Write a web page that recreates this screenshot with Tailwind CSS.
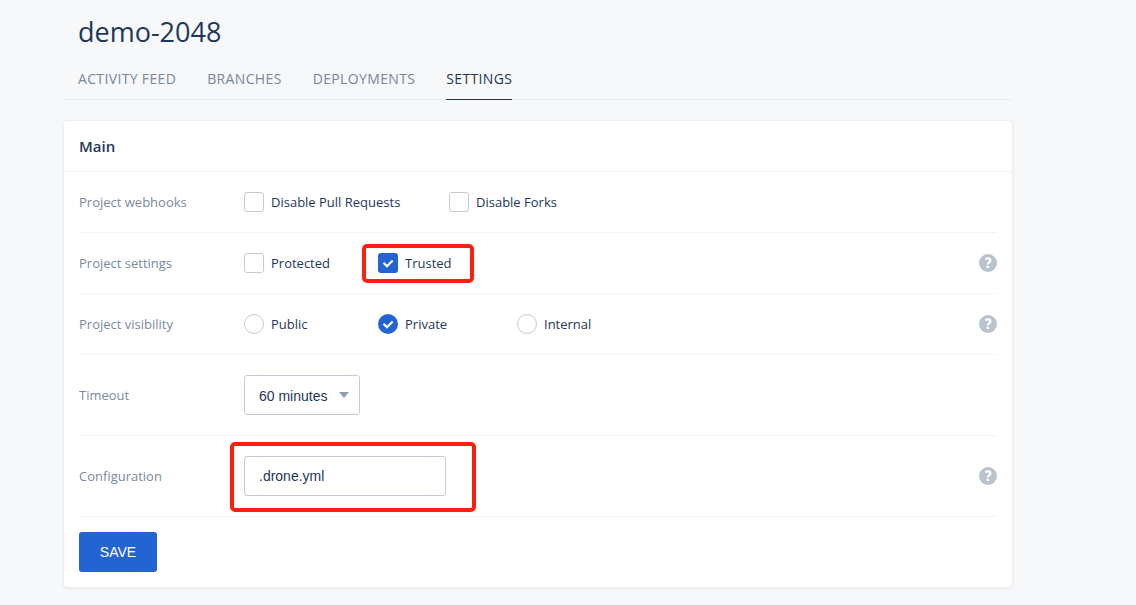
<!DOCTYPE html>
<html lang="en">
<head>
<meta charset="utf-8">
<meta name="viewport" content="width=device-width, initial-scale=1">
<title>demo-2048 settings</title>
<script src="https://cdn.jsdelivr.net/npm/@tailwindcss/browser@4"></script>
</head>
<body class="min-h-screen bg-[#f6f8fa] font-['Segoe_UI','Open_Sans',sans-serif] text-[13px] leading-[21px] text-[#1e375a]">
<svg class="hidden" aria-hidden="true">
  <symbol id="tick" viewBox="0 0 20 20"><path d="M5.500 9.800l3.500 3.500 5.700-5.800" fill="none" stroke="#fff" stroke-width="2.200"/></symbol>
  <symbol id="help" viewBox="0 0 18 18"><circle cx="9" cy="9" r="9" fill="currentColor"/><path d="M6.300 5.200c1.700-1.200 5-1.200 5 1.200 0 2-2.500 1.900-2.500 4.100" fill="none" stroke="#fff" stroke-width="2.300"/><path d="M7.500 11.800h2.400v2.200H7.500z" fill="#fff"/></symbol>
</svg>
<div class="mr-[123px] ml-[63px]">
  <header>
    <h1 class="px-[15px] pt-3 text-[27px] leading-10">demo-2048</h1>
    <nav class="mt-3 flex gap-[31px] border-b border-[#ebedf1] px-[15px] text-sm leading-[30px] tracking-wide text-[#7a869a]">
      <a href="#" class="-mb-px border-b border-transparent pb-[5px]">ACTIVITY FEED</a>
      <a href="#" class="-mb-px border-b border-transparent pb-[5px]">BRANCHES</a>
      <a href="#" class="-mb-px border-b border-transparent pb-[5px]">DEPLOYMENTS</a>
      <a href="#" aria-current="page" class="-mb-px border-b border-[#1e375a] pb-[5px] font-medium text-[#1e375a]">SETTINGS</a>
    </nav>
  </header>
  <form class="mt-5 rounded-sm border border-[#ebeef2] bg-white shadow-sm shadow-black/5">
    <h2 class="border-b border-[#f0f1f3] px-[15px] text-[15px] leading-[50px] font-semibold">Main</h2>
    <div class="px-[15px]">
      <fieldset class="flex h-[61px] items-center border-b border-[#f3f4f6]">
        <div class="w-[165px] text-[#7a8a9f]">Project webhooks</div>
        <label class="flex w-[205px] items-center gap-[7px]"><input type="checkbox" class="size-5 appearance-none rounded-[3px] border border-[#c5cad6] bg-white">Disable Pull Requests</label>
        <label class="flex items-center gap-[7px]"><input type="checkbox" class="size-5 appearance-none rounded-[3px] border border-[#c5cad6] bg-white">Disable Forks</label>
      </fieldset>
      <fieldset class="flex h-[61px] items-center border-b border-[#f3f4f6]">
        <div class="w-[165px] text-[#7a8a9f]">Project settings</div>
        <label class="flex w-[134px] items-center gap-[7px]"><input type="checkbox" class="size-5 appearance-none rounded-[3px] border border-[#c5cad6] bg-white">Protected</label>
        <div class="relative">
          <label class="flex items-center gap-[7px]"><span class="grid"><input type="checkbox" checked class="col-start-1 row-start-1 size-5 appearance-none rounded-[3px] bg-[#2364d2]"><svg class="pointer-events-none col-start-1 row-start-1 size-5"><use href="#tick"/></svg></span>Trusted</label>
          <div class="pointer-events-none absolute -top-[9px] -left-4 h-[39px] w-[112px] rounded-[5px] border-4 border-[#ff1e12]"></div>
        </div>
        <button type="button" aria-label="Help" class="ml-auto text-[#bac3cd]"><svg class="size-[18px]"><use href="#help"/></svg></button>
      </fieldset>
      <fieldset class="flex h-[61px] items-center border-b border-[#f3f4f6]">
        <div class="w-[165px] text-[#7a8a9f]">Project visibility</div>
        <label class="flex w-[134px] items-center gap-[7px]"><input type="radio" name="visibility" class="size-5 appearance-none rounded-full border border-[#c5cad6] bg-white">Public</label>
        <label class="flex w-[139px] items-center gap-[7px]"><span class="grid"><input type="radio" name="visibility" checked class="col-start-1 row-start-1 size-5 appearance-none rounded-full bg-[#2364d2]"><svg class="pointer-events-none col-start-1 row-start-1 size-5"><use href="#tick"/></svg></span>Private</label>
        <label class="flex items-center gap-[7px]"><input type="radio" name="visibility" class="size-5 appearance-none rounded-full border border-[#c5cad6] bg-white">Internal</label>
        <button type="button" aria-label="Help" class="ml-auto text-[#bac3cd]"><svg class="size-[18px]"><use href="#help"/></svg></button>
      </fieldset>
      <div class="flex h-[81px] items-center border-b border-[#f3f4f6]">
        <label for="timeout" class="w-[165px] text-[#7a8a9f]">Timeout</label>
        <div class="grid items-center">
          <select id="timeout" class="col-start-1 row-start-1 h-10 w-29 appearance-none rounded-[3px] border border-[#c5cad6] bg-white px-3.5 pt-0.5 font-['Liberation_Sans',sans-serif] text-sm"><option>60 minutes</option></select>
          <svg class="pointer-events-none col-start-1 row-start-1 mr-[11px] h-1.5 w-2.5 justify-self-end" viewBox="0 0 10 6"><path d="M0 0h10L5 6z" fill="#959eab"/></svg>
        </div>
      </div>
      <div class="flex h-[81px] items-center border-b border-[#f3f4f6]">
        <label for="config" class="w-[165px] text-[#7a8a9f]">Configuration</label>
        <div class="relative">
          <input id="config" type="text" value=".drone.yml" class="block h-10 w-[202px] rounded-[3px] border border-[#c5cad6] bg-white px-3.5 font-['Liberation_Sans',sans-serif] text-sm">
          <div class="pointer-events-none absolute -top-3.5 -left-3.5 h-[70px] w-[246px] rounded-[5px] border-4 border-[#ff1e12]"></div>
        </div>
        <button type="button" aria-label="Help" class="ml-auto text-[#bac3cd]"><svg class="size-[18px]"><use href="#help"/></svg></button>
      </div>
      <button type="submit" class="my-[15px] block h-10 w-[78px] rounded-[3px] bg-[#2364d2] font-['Liberation_Sans',sans-serif] text-sm text-white">SAVE</button>
    </div>
  </form>
</div>
</body>
</html>
